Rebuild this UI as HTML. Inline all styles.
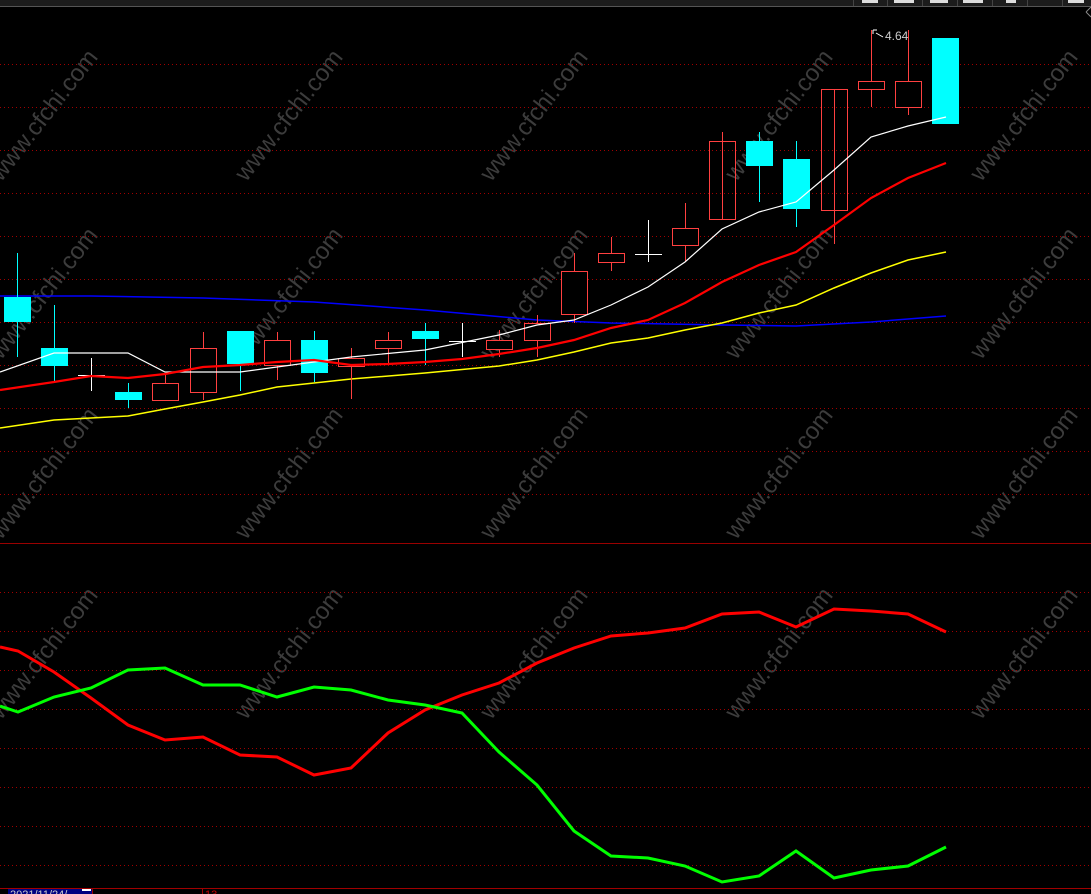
<!DOCTYPE html>
<html><head><meta charset="utf-8"><style>
html,body{margin:0;padding:0;background:#000;width:1091px;height:894px;overflow:hidden}
svg{display:block}
</style></head><body>
<svg width="1091" height="894" viewBox="0 0 1091 894" xmlns="http://www.w3.org/2000/svg" font-family="Liberation Sans, sans-serif">
<rect width="1091" height="894" fill="#000"/>
<rect x="0" y="0" width="1091" height="6" fill="#1c1c1c"/>
<line x1="0" y1="6.5" x2="1091" y2="6.5" stroke="#555" stroke-width="1"/>
<g stroke="#444" stroke-width="1">
<line x1="853.5" y1="0" x2="853.5" y2="6"/><line x1="887.5" y1="0" x2="887.5" y2="6"/><line x1="922.5" y1="0" x2="922.5" y2="6"/><line x1="957.5" y1="0" x2="957.5" y2="6"/><line x1="992.5" y1="0" x2="992.5" y2="6"/><line x1="1027.5" y1="0" x2="1027.5" y2="6"/><line x1="1062.5" y1="0" x2="1062.5" y2="6"/>
</g>
<g fill="#ddd"><rect x="862" y="0" width="16" height="3"/><rect x="894" y="0" width="20" height="3"/><rect x="930" y="0" width="18" height="3"/><rect x="963" y="0" width="20" height="3"/><rect x="1006" y="0" width="10" height="3"/><rect x="1068" y="0" width="16" height="3"/></g>
<path d="M1086 12 L1091 7 M1086 12 L1091 17" stroke="#888" fill="none"/>
<!-- watermarks -->
<g fill="#3c3c3c" font-size="24" text-anchor="middle">
<text transform="translate(50,120) rotate(-52)">www.cfchi.com</text>
<text transform="translate(295,120) rotate(-52)">www.cfchi.com</text>
<text transform="translate(540,120) rotate(-52)">www.cfchi.com</text>
<text transform="translate(785,120) rotate(-52)">www.cfchi.com</text>
<text transform="translate(1030,120) rotate(-52)">www.cfchi.com</text>
<text transform="translate(50,298) rotate(-52)">www.cfchi.com</text>
<text transform="translate(295,298) rotate(-52)">www.cfchi.com</text>
<text transform="translate(540,298) rotate(-52)">www.cfchi.com</text>
<text transform="translate(785,298) rotate(-52)">www.cfchi.com</text>
<text transform="translate(1030,298) rotate(-52)">www.cfchi.com</text>
<text transform="translate(50,478) rotate(-52)">www.cfchi.com</text>
<text transform="translate(295,478) rotate(-52)">www.cfchi.com</text>
<text transform="translate(540,478) rotate(-52)">www.cfchi.com</text>
<text transform="translate(785,478) rotate(-52)">www.cfchi.com</text>
<text transform="translate(1030,478) rotate(-52)">www.cfchi.com</text>
<text transform="translate(50,658) rotate(-52)">www.cfchi.com</text>
<text transform="translate(295,658) rotate(-52)">www.cfchi.com</text>
<text transform="translate(540,658) rotate(-52)">www.cfchi.com</text>
<text transform="translate(785,658) rotate(-52)">www.cfchi.com</text>
<text transform="translate(1030,658) rotate(-52)">www.cfchi.com</text>
</g>
<!-- grid -->
<g stroke="#a00000" stroke-width="1" stroke-dasharray="1,3">
<line x1="0" y1="64.5" x2="1091" y2="64.5"/><line x1="0" y1="107.5" x2="1091" y2="107.5"/><line x1="0" y1="150.5" x2="1091" y2="150.5"/><line x1="0" y1="193.5" x2="1091" y2="193.5"/><line x1="0" y1="236.5" x2="1091" y2="236.5"/><line x1="0" y1="279.5" x2="1091" y2="279.5"/><line x1="0" y1="322.5" x2="1091" y2="322.5"/><line x1="0" y1="365.5" x2="1091" y2="365.5"/><line x1="0" y1="408.5" x2="1091" y2="408.5"/><line x1="0" y1="451.5" x2="1091" y2="451.5"/><line x1="0" y1="494.5" x2="1091" y2="494.5"/>
<line x1="0" y1="592.5" x2="1091" y2="592.5"/><line x1="0" y1="631.5" x2="1091" y2="631.5"/><line x1="0" y1="670.5" x2="1091" y2="670.5"/><line x1="0" y1="709.5" x2="1091" y2="709.5"/><line x1="0" y1="748.5" x2="1091" y2="748.5"/><line x1="0" y1="787.5" x2="1091" y2="787.5"/><line x1="0" y1="826.5" x2="1091" y2="826.5"/><line x1="0" y1="865.5" x2="1091" y2="865.5"/>
</g>
<line x1="0" y1="543.5" x2="1091" y2="543.5" stroke="#900" stroke-width="1"/>
<!-- MA lines -->
<polyline fill="none" stroke="#0000ff" stroke-width="1.5" points="0,296 91,296 203,298 314,302 425,310 537,320 611,323 722,325 796,326 871,322 946,316"/>
<polyline fill="none" stroke="#ffff00" stroke-width="1.5" points="0,428 54,420 128,416 165,409 203,402 240,395 277,387 351,379 425,373 499,366 537,360 574,352 611,343 648,338 685,330 722,323 759,313 796,305 834,288 871,273 908,260 946,252"/>
<!-- candles -->
<g stroke="#00ffff" stroke-width="1"><line x1="17.5" y1="253" x2="17.5" y2="357"/><line x1="54.5" y1="305" x2="54.5" y2="381"/><line x1="128.5" y1="383" x2="128.5" y2="408"/><line x1="240.5" y1="331" x2="240.5" y2="391"/><line x1="314.5" y1="331" x2="314.5" y2="382"/><line x1="425.5" y1="323" x2="425.5" y2="365"/><line x1="759.5" y1="132" x2="759.5" y2="202"/><line x1="796.5" y1="141" x2="796.5" y2="227"/></g>
<g fill="#00ffff"><rect x="4" y="297" width="27" height="25"/><rect x="41" y="348" width="27" height="18"/><rect x="115" y="392" width="27" height="8"/><rect x="227" y="331" width="27" height="33"/><rect x="301" y="340" width="27" height="33"/><rect x="412" y="331" width="27" height="8"/><rect x="746" y="141" width="27" height="25"/><rect x="783" y="159" width="27" height="50"/><rect x="932" y="38" width="27" height="86"/></g>
<g stroke="#fff" stroke-width="1"><line x1="91.5" y1="358" x2="91.5" y2="391"/><line x1="78" y1="375.5" x2="105" y2="375.5"/><line x1="462.5" y1="323" x2="462.5" y2="357"/><line x1="449" y1="341.5" x2="476" y2="341.5"/><line x1="648.5" y1="220" x2="648.5" y2="262"/><line x1="635" y1="254.5" x2="662" y2="254.5"/></g>
<g stroke="#ff4040" stroke-width="1" fill="none">
<line x1="165.5" y1="375" x2="165.5" y2="383"/><rect x="152.5" y="383.5" width="26" height="17"/>
<line x1="203.5" y1="332" x2="203.5" y2="400"/><rect x="190.5" y="348.5" width="26" height="44" fill="#000"/>
<line x1="277.5" y1="332" x2="277.5" y2="380"/><rect x="264.5" y="340.5" width="26" height="25" fill="#000"/>
<line x1="351.5" y1="348" x2="351.5" y2="399"/><rect x="338.5" y="358.5" width="26" height="8" fill="#000"/>
<line x1="388.5" y1="332" x2="388.5" y2="365"/><rect x="375.5" y="340.5" width="26" height="8" fill="#000"/>
<line x1="499.5" y1="330" x2="499.5" y2="357"/><rect x="486.5" y="340.5" width="26" height="9" fill="#000"/>
<line x1="537.5" y1="315" x2="537.5" y2="357"/><rect x="524.5" y="323.5" width="26" height="17" fill="#000"/>
<line x1="574.5" y1="253" x2="574.5" y2="323"/><rect x="561.5" y="271.5" width="26" height="43" fill="#000"/>
<line x1="611.5" y1="237" x2="611.5" y2="271"/><rect x="598.5" y="253.5" width="26" height="9" fill="#000"/>
<line x1="685.5" y1="203" x2="685.5" y2="262"/><rect x="672.5" y="228.5" width="26" height="17" fill="#000"/>
<line x1="722.5" y1="132" x2="722.5" y2="219"/><rect x="709.5" y="141.5" width="26" height="78"/>
<line x1="834.5" y1="89" x2="834.5" y2="244"/><rect x="821.5" y="89.5" width="26" height="121"/>
<line x1="871.5" y1="30" x2="871.5" y2="107"/><rect x="858.5" y="81.5" width="26" height="8" fill="#000"/>
<line x1="908.5" y1="30" x2="908.5" y2="115"/><rect x="895.5" y="81.5" width="26" height="26" fill="#000"/>
</g>
<polyline fill="none" stroke="#fff" stroke-width="1.2" points="0,372 54,353 128,353 165,372 240,372 314,362 351,357 425,350 499,335 537,325 574,320 611,305 648,287 685,262 722,229 759,212 796,202 834,170 871,137 908,126 946,117"/>
<polyline fill="none" stroke="#ff0000" stroke-width="2.2" points="0,390 54,382 91,376 128,378 165,374 203,367 240,365 277,362 314,360 351,365 388,364 425,362 462,359 499,354 537,348 574,340 611,328 648,320 685,303 722,282 759,265 796,252 834,225 871,198 908,178 946,163"/>
<path d="M873 30 L873 34 M873 30 L877 30 M876 33 L883 37" stroke="#fff" fill="none"/>
<text x="885" y="40" font-size="12" fill="#ccc">4.64</text>
<!-- lower indicator -->
<polyline fill="none" stroke="#ff0000" stroke-width="3" points="0,647 18,651 54,672 91,698 128,725 165,740 203,737 240,755 277,757 314,775 351,768 388,733 425,710 462,695 499,683 537,663 574,648 611,636 648,633 685,628 722,614 759,612 796,627 834,609 871,611 908,614 946,632"/>
<polyline fill="none" stroke="#00ff00" stroke-width="3" points="0,706 18,712 54,697 91,688 128,670 165,668 203,685 240,685 277,697 314,687 351,690 388,700 425,705 462,713 499,752 537,785 574,831 611,856 648,858 685,866 722,882 759,876 796,851 834,878 871,870 908,866 946,847"/>
<!-- bottom bar -->
<line x1="0" y1="888.5" x2="1091" y2="888.5" stroke="#a00000"/>
<rect x="8" y="889" width="84" height="5" fill="#000080"/>
<line x1="92.5" y1="889" x2="92.5" y2="894" stroke="#a00000"/>
<line x1="202.5" y1="889" x2="202.5" y2="894" stroke="#a00000"/>
<rect x="82" y="889" width="9" height="2" fill="#fff"/>
<text x="10" y="898" font-size="11" fill="#ccc">2021/11/24/</text>
<text x="205" y="898" font-size="11" fill="#c00">13</text>
</svg>
</body></html>
